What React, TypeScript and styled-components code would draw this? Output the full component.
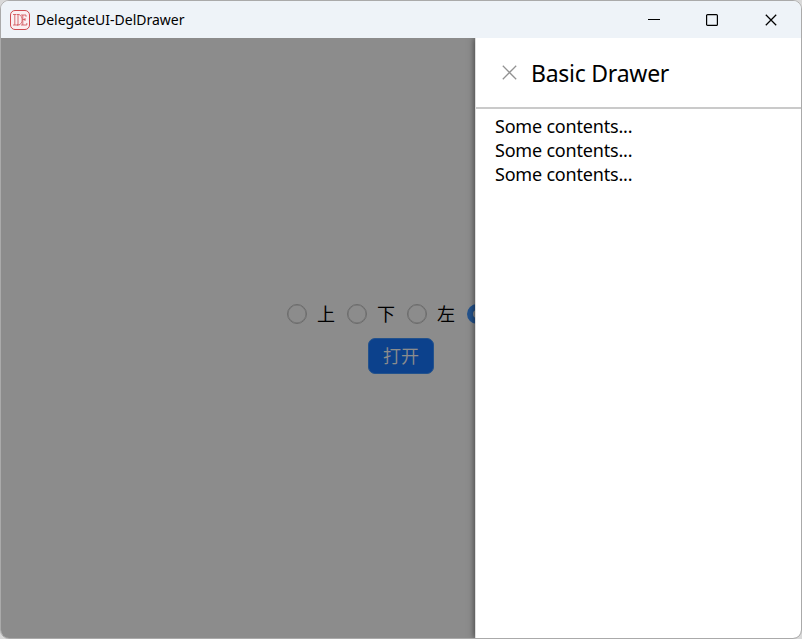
import React from "react";
import styled, { createGlobalStyle } from "styled-components";

const GlobalStyle = createGlobalStyle`
  * { box-sizing: border-box; }
  body {
    margin: 0;
    background: #d9d9d9;
    font-family: "Noto Sans", "Noto Sans CJK SC", sans-serif;
    color: #000;
    overflow: hidden;
  }
`;

const Window = styled.div`
  display: flex;
  flex-direction: column;
  width: 802px;
  height: 639px;
  border: 1px solid #aaa;
  border-radius: 9px;
  overflow: hidden;
  background: #fff;
`;

const TitleBar = styled.header`
  display: flex;
  align-items: center;
  flex: 0 0 37px;
  padding-left: 9px;
  background: #eef3f8;
`;

const Title = styled.span`
  margin-left: 6px;
  flex: 1;
  font-size: 14px;
  line-height: 20px;
  white-space: nowrap;
`;

const Controls = styled.div`
  display: flex;
  height: 37px;
`;

const WindowButton = styled.button<{ $width: number }>`
  display: flex;
  align-items: center;
  justify-content: center;
  width: ${(p) => p.$width}px;
  padding: 0;
  border: 0;
  background: transparent;
`;

const Body = styled.main`
  position: relative;
  display: flex;
  flex: 1;
  flex-direction: column;
  align-items: center;
  padding-top: 263px;
  overflow: hidden;
`;

const RadioGroup = styled.div`
  display: flex;
  gap: 12px;
  height: 24px;
`;

const Radio = styled.label`
  display: flex;
  align-items: flex-end;
  gap: 10px;
  height: 24px;
  font: 18px/24px "Noto Sans CJK SC", sans-serif;
`;

const RadioDot = styled.span<{ $checked: boolean }>`
  width: 20px;
  height: 20px;
  margin-bottom: 1px;
  border-radius: 50%;
  border: ${(p) => (p.$checked ? "6px solid #4096ff" : "1.5px solid #c4c4c4")};
  box-shadow: ${(p) => (p.$checked ? "none" : "inset 0 0 0 0.5px #c8c8c8")};
  background: #fff;
`;

const OpenButton = styled.button`
  width: 66px;
  height: 36px;
  margin-top: 13px;
  padding: 0 0 2px;
  border: 1px solid #4096ff;
  border-radius: 7px;
  background: #1677ff;
  color: #fff;
  font: 350 18px/32px "Noto Sans CJK SC", sans-serif;
`;

const Mask = styled.div`
  position: absolute;
  inset: 0;
  background: rgba(0, 0, 0, 0.45);
`;

const Drawer = styled.aside`
  position: absolute;
  top: 0;
  right: 0;
  bottom: 0;
  width: 326px;
  border-left: 1px solid #dedede;
  background: #fff;
  box-shadow: -1px 0 6px rgba(0, 0, 0, 0.5);
`;

const DrawerHeader = styled.div`
  display: flex;
  align-items: center;
  height: 71px;
  padding-left: 26px;
  border-bottom: 2px solid #cacaca;
`;

const DrawerTitle = styled.h1`
  margin: 0 0 0 14px;
  font-size: 23px;
  font-weight: 400;
  line-height: 32px;
  letter-spacing: -0.25px;
  white-space: nowrap;
`;

const DrawerContent = styled.div`
  padding: 5px 0 0 19px;
`;

const Line = styled.p`
  margin: 0;
  font-size: 18px;
  line-height: 24px;
  letter-spacing: -0.2px;
`;

const LogoIcon = () => (
  <svg width="20" height="20" viewBox="0 0 20 20" fill="none" stroke="#cf4a50">
    <rect x="0.5" y="0.5" width="19" height="19" rx="4.5" fill="#fbeff2" />
    <g strokeWidth="0.8">
      <path d="M3 4.5H6.5M4.8 4.5v10.5M3 15H8" />
      <path d="M7 4.5h2c4.2 1.5 4.2 9 0 10.5H7M8 4.5v10.5" />
      <path d="M11 5H16v1.8M12.8 5v10M12.8 9.5H15.2M15 8v3M11 15H16.8v-2" />
    </g>
  </svg>
);

const CrossIcon = ({ size, color }: { size: number; color: string }) => (
  <svg width={size} height={size} viewBox={`0 0 ${size} ${size}`} stroke={color} strokeWidth="1.25">
    <path d={`M0.8 0.8L${size - 0.8} ${size - 0.8}M${size - 0.8} 0.8L0.8 ${size - 0.8}`} />
  </svg>
);

const directions = ["上", "下", "左", "右"];
const lines = ["Some contents...", "Some contents...", "Some contents..."];

export default function App() {
  return (
    <>
      <GlobalStyle />
      <Window>
        <TitleBar>
          <LogoIcon />
          <Title>DelegateUI-DelDrawer</Title>
          <Controls>
            <WindowButton $width={58} aria-label="Minimize">
              <svg width="12" height="12" viewBox="0 0 12 12">
                <path d="M0 5.5H12" stroke="#000" />
              </svg>
            </WindowButton>
            <WindowButton $width={58} aria-label="Maximize">
              <svg width="12" height="12" viewBox="0 0 12 12">
                <rect x="0.6" y="0.6" width="10.8" height="10.8" rx="1" fill="none" stroke="#000" strokeWidth="1.2" />
              </svg>
            </WindowButton>
            <WindowButton $width={60} aria-label="Close">
              <CrossIcon size={12} color="#000" />
            </WindowButton>
          </Controls>
        </TitleBar>
        <Body>
          <RadioGroup>
            {directions.map((name) => (
              <Radio key={name}>
                <RadioDot $checked={name === "右"} />
                {name}
              </Radio>
            ))}
          </RadioGroup>
          <OpenButton>打开</OpenButton>
          <Mask />
          <Drawer>
            <DrawerHeader>
              <CrossIcon size={15} color="#929292" />
              <DrawerTitle>Basic Drawer</DrawerTitle>
            </DrawerHeader>
            <DrawerContent>
              {lines.map((line, i) => (
                <Line key={i}>{line}</Line>
              ))}
            </DrawerContent>
          </Drawer>
        </Body>
      </Window>
    </>
  );
}
